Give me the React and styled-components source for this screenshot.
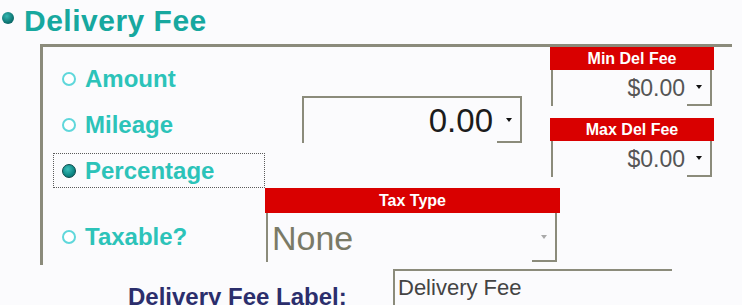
import React from 'react';
import styled, { createGlobalStyle } from 'styled-components';

const GlobalStyle = createGlobalStyle`
  body {
    margin: 0;
    background: #fbfbfd;
    font-family: 'Liberation Sans', Arial, sans-serif;
  }
`;

const LINE = '#8b8b7b';

const App = () => {
  return (
    <Page>
      <GlobalStyle />
      <Title>
        <TitleBullet />
        <TitleText>Delivery Fee</TitleText>
      </Title>

      <Group>
        <TopArea>
          <RadioColumn>
            <RadioItem>
              <Radio />
              <RadioLabel>Amount</RadioLabel>
            </RadioItem>
            <RadioItem>
              <Radio />
              <RadioLabel>Mileage</RadioLabel>
            </RadioItem>
            <RadioItem focused>
              <Radio checked />
              <RadioLabel>Percentage</RadioLabel>
            </RadioItem>
          </RadioColumn>

          <AmountCombo>
            <AmountValue>0.00</AmountValue>
            <ArrowCell>
              <Arrow />
            </ArrowCell>
          </AmountCombo>

          <FeeColumn>
            <FeeField>
              <Header>Min Del Fee</Header>
              <FeeCombo>
                <FeeValue>$0.00</FeeValue>
                <ArrowCell>
                  <Arrow />
                </ArrowCell>
              </FeeCombo>
            </FeeField>
            <FeeField>
              <Header>Max Del Fee</Header>
              <FeeCombo>
                <FeeValue>$0.00</FeeValue>
                <ArrowCell>
                  <Arrow />
                </ArrowCell>
              </FeeCombo>
            </FeeField>
          </FeeColumn>
        </TopArea>

        <BottomArea>
          <TaxableItem>
            <Radio />
            <RadioLabel>Taxable?</RadioLabel>
          </TaxableItem>
          <TaxBlock>
            <Header tall>Tax Type</Header>
            <TaxCombo>
              <TaxValue>None</TaxValue>
              <ArrowCell>
                <Arrow disabled />
              </ArrowCell>
            </TaxCombo>
          </TaxBlock>
        </BottomArea>
      </Group>

      <LabelRow>
        <FieldLabel>Delivery Fee Label:</FieldLabel>
        <LabelInput>Delivery Fee</LabelInput>
      </LabelRow>
    </Page>
  );
};

const Page = styled.div`
  width: 742px;
  height: 305px;
  overflow: hidden;
`;

const Title = styled.div`
  display: flex;
  align-items: flex-start;
  box-sizing: border-box;
  height: 44px;
  padding: 6px 0 0 2px;
`;

const TitleBullet = styled.span`
  width: 12px;
  height: 12px;
  margin-top: 6px;
  margin-right: 10px;
  border-radius: 50%;
  background: radial-gradient(circle at 40% 35%, #35b8b2, #0d7573 60%, #07494a);
`;

const TitleText = styled.span`
  font-size: 30px;
  font-weight: bold;
  line-height: 30px;
  letter-spacing: 0.5px;
  color: #17a89f;
`;

const Group = styled.div`
  display: flex;
  flex-direction: column;
  box-sizing: border-box;
  margin-left: 40px;
  width: 692px;
  height: 221px;
  border-top: 3px solid ${LINE};
  border-left: 3px solid ${LINE};
`;

const TopArea = styled.div`
  display: flex;
  align-items: flex-start;
  height: 141px;
`;

const RadioColumn = styled.div`
  display: flex;
  flex-direction: column;
  gap: 11px;
  width: 212px;
  margin-left: 10px;
  padding-top: 14px;
`;

const RadioItem = styled.div`
  display: flex;
  align-items: center;
  gap: 9px;
  box-sizing: border-box;
  height: 35px;
  padding-left: 8px;
  border: 1px dotted ${({ focused }) => (focused ? '#5a5a5a' : 'transparent')};
`;

const TaxableItem = styled(RadioItem)`
  width: 212px;
  margin-left: 10px;
  margin-top: 31px;
`;

const Radio = styled.span`
  flex: none;
  width: 14px;
  height: 14px;
  box-sizing: border-box;
  border-radius: 50%;
  border: ${({ checked }) => (checked ? '1.5px solid #0a4849' : '2px solid #5fd7db')};
  background: ${({ checked }) =>
    checked ? 'radial-gradient(circle at 40% 35%, #3cc0bb, #0e8784 60%, #0a5f5f)' : '#ffffff'};
`;

const RadioLabel = styled.span`
  font-size: 24px;
  font-weight: bold;
  line-height: 1;
  color: #2cc3b9;
`;

const ComboBase = styled.div`
  display: flex;
  box-sizing: border-box;
  border-left: 2px solid ${LINE};
  border-right: 2px solid ${LINE};
`;

const AmountCombo = styled(ComboBase)`
  width: 220px;
  height: 47px;
  margin-left: 37px;
  margin-top: 49px;
  border-top: 2px solid ${LINE};
`;

const AmountValue = styled.span`
  flex: 1;
  align-self: center;
  padding-right: 4px;
  text-align: right;
  font-size: 33px;
  line-height: 1;
  color: #1c1c1c;
`;

const ArrowCell = styled.span`
  flex: none;
  display: flex;
  align-items: center;
  justify-content: center;
  width: 23px;
  border-bottom: 2px solid ${LINE};
`;

const Arrow = styled.span`
  width: 0;
  height: 0;
  border-left: 3.5px solid transparent;
  border-right: 3.5px solid transparent;
  border-top: 4px solid ${({ disabled }) => (disabled ? '#a9a9a9' : '#111111')};
`;

const FeeColumn = styled.div`
  display: flex;
  flex-direction: column;
  gap: 12px;
  width: 164px;
  margin-left: 28px;
`;

const FeeField = styled.div`
  display: flex;
  flex-direction: column;
`;

const Header = styled.div`
  height: ${({ tall }) => (tall ? '25px' : '23px')};
  line-height: ${({ tall }) => (tall ? '26px' : '24px')};
  background: #d90000;
  color: #ffffff;
  font-size: 16px;
  font-weight: bold;
  text-align: center;
`;

const FeeCombo = styled(ComboBase)`
  width: 161px;
  height: 36px;
  margin-left: 1px;
`;

const FeeValue = styled.span`
  flex: 1;
  align-self: center;
  padding-right: 2px;
  text-align: right;
  font-size: 23px;
  line-height: 1;
  color: #555555;
`;

const BottomArea = styled.div`
  display: flex;
  align-items: flex-start;
  flex: 1;
`;

const TaxBlock = styled.div`
  display: flex;
  flex-direction: column;
  width: 295px;
`;

const TaxCombo = styled(ComboBase)`
  width: 291px;
  height: 49px;
  margin-left: 1px;
`;

const TaxValue = styled.span`
  flex: 1;
  align-self: center;
  padding-left: 4px;
  font-size: 34px;
  line-height: 1;
  color: #7a7a66;
`;

const LabelRow = styled.div`
  display: flex;
  align-items: flex-start;
  padding-left: 128px;
`;

const FieldLabel = styled.span`
  width: 265px;
  margin-top: 20px;
  font-size: 24px;
  font-weight: bold;
  line-height: 24px;
  color: #2b2e6c;
`;

const LabelInput = styled.div`
  width: 279px;
  height: 40px;
  margin-top: 4px;
  box-sizing: border-box;
  padding: 6px 0 0 3px;
  border-top: 2px solid ${LINE};
  border-left: 2px solid ${LINE};
  font-size: 22px;
  line-height: 22px;
  color: #444444;
`;

export default App;
